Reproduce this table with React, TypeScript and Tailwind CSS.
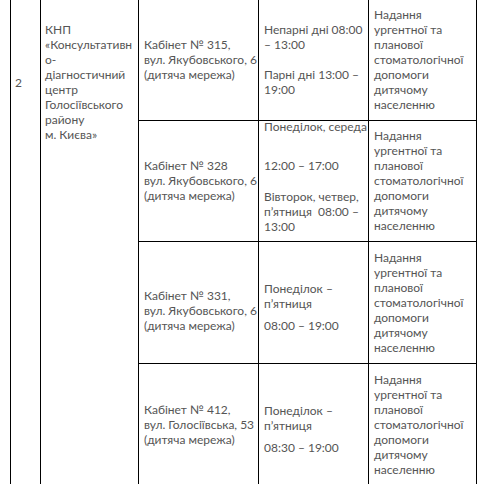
const rows = [
  {
    room: ["Кабінет № 315,", "вул. Якубовського, 6", "(дитяча мережа)"],
    roomPad: "",
    hoursPad: "",
    hours: (
      <>
        <p>Непарні дні 08:00</p>
        <p>– 13:00</p>
        <p className="mt-[15px]">Парні дні 13:00 –</p>
        <p>19:00</p>
      </>
    ),
    h: "h-[120px]",
  },
  {
    room: ["Кабінет № 328", "вул. Якубовського, 6", "(дитяча мережа)"],
    roomPad: "",
    hoursPad: "",
    hours: (
      <>
        <p className="-mt-[8px]">Понеділок, середа</p>
        <p className="mt-[24px]">12:00 – 17:00</p>
        <p className="mt-[16px]">Вівторок, четвер,</p>
        <p>п’ятниця&nbsp; 08:00 –</p>
        <p>13:00</p>
      </>
    ),
    h: "h-[121px]",
  },
  {
    room: ["Кабінет № 331,", "вул. Якубовського, 6", "(дитяча мережа)"],
    roomPad: "pt-[16px]",
    hoursPad: "pt-[10px]",
    hours: (
      <>
        <p>Понеділок –</p>
        <p>п’ятниця</p>
        <p className="mt-[7px]">08:00 – 19:00</p>
      </>
    ),
    h: "h-[122px]",
  },
  {
    room: ["Кабінет № 412,", "вул. Голосіївська, 53", "(дитяча мережа)"],
    roomPad: "",
    hoursPad: "pt-[10px]",
    hours: (
      <>
        <p>Понеділок –</p>
        <p>п’ятниця</p>
        <p className="mt-[7px]">08:30 – 19:00</p>
      </>
    ),
    h: "h-[122px]",
  },
];

const service = ["Надання", "ургентної та", "планової", "стоматологічної", "допомоги", "дитячому", "населенню"];
const org = ["КНП", "«Консультативн", "о-", "діагностичний", "центр", "Голосіївського", "району", "м. Києва»"];

export default function App() {
  return (
    <div className="bg-white w-[486px] h-[484px] overflow-hidden pl-[10px]">
      <table
        className="w-[466px] table-fixed border-collapse text-[12px] leading-[15px] text-[#555]"
        style={{ fontFamily: 'Lato, "Liberation Sans", sans-serif' }}
      >
        <colgroup>
          <col className="w-[30px]" />
          <col className="w-[98px]" />
          <col className="w-[120px]" />
          <col className="w-[110px]" />
          <col className="w-[108px]" />
        </colgroup>
        <tbody>
          {rows.map((r, i) => (
            <tr key={i} className={r.h}>
              {i === 0 && (
                <>
                  <td rowSpan={4} className="border-x border-black align-top px-[4px] pt-[75px]">
                    2
                  </td>
                  <td rowSpan={4} className="border-x border-black align-top px-[4px] pt-[22px]">
                    {org.map((l) => (
                      <div key={l} className="whitespace-nowrap">{l}</div>
                    ))}
                  </td>
                </>
              )}
              <td className={`border border-black ${i === 0 ? "border-t-0" : ""} align-middle px-[5px] whitespace-nowrap ${r.roomPad}`}>
                {r.room.map((l) => (
                  <div key={l}>{l}</div>
                ))}
              </td>
              <td className={`border border-black ${i === 0 ? "border-t-0" : ""} align-middle px-[5px] whitespace-nowrap ${r.hoursPad}`}>
                {r.hours}
              </td>
              <td className={`border border-black ${i === 0 ? "border-t-0" : ""} align-middle px-[5px] whitespace-nowrap`}>
                {service.map((l) => (
                  <div key={l}>{l}</div>
                ))}
              </td>
            </tr>
          ))}
        </tbody>
      </table>
    </div>
  );
}
